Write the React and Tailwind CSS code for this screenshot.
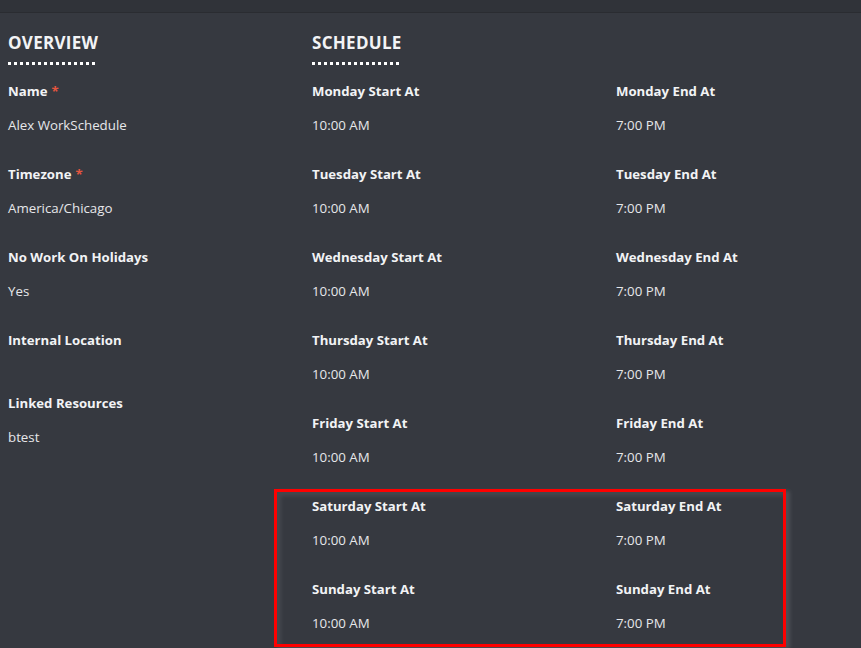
import React from "react";

const overview = [
  { label: "Name", value: "Alex WorkSchedule", req: true },
  { label: "Timezone", value: "America/Chicago", req: true },
  { label: "No Work On Holidays", value: "Yes" },
  { label: "Internal Location", value: "" },
  { label: "Linked Resources", value: "btest" },
];

const days = ["Monday", "Tuesday", "Wednesday", "Thursday", "Friday", "Saturday", "Sunday"];

function Field({ label, value, req }) {
  return (
    <div className="flex flex-col pb-[30px]">
      <div className="h-[18px] leading-[18px] text-[13.2px] font-bold text-[#f2f3f5]">
        {label}
        {req && <span className="ml-[4px] text-[#e4553f]">*</span>}
      </div>
      <div className="mt-[15px] leading-[20px] text-[13.3px] text-[#e6e7ea]">{value}</div>
    </div>
  );
}

function Heading({ children }) {
  return (
    <div className="h-[82px] pt-[31px]">
      <div className="inline-flex flex-col">
        <div className="text-[17px] leading-[24px] font-bold text-[#f2f3f5] tracking-[0.3px]">{children}</div>
        <div className="mt-[7px] h-[3px] w-full bg-[repeating-linear-gradient(to_right,#ffffff_0px,#ffffff_3px,transparent_3px,transparent_6px)]" />
      </div>
    </div>
  );
}

export default function App() {
  return (
    <div
      className="relative w-[861px] h-[648px] overflow-hidden bg-[#363940]"
      style={{ fontFamily: "'Open Sans', 'Noto Sans', sans-serif" }}
    >
      <div className="h-[13px] bg-[#303339] border-b border-[#2a2c31]" />
      <div className="grid grid-cols-[304px_304px_1fr] pl-[8px] mt-[-13px]">
        <div>
          <Heading>OVERVIEW</Heading>
          {overview.map((f) => (
            <Field key={f.label} {...f} />
          ))}
        </div>
        <div>
          <Heading>SCHEDULE</Heading>
          {days.map((d) => (
            <Field key={d} label={`${d} Start At`} value="10:00 AM" />
          ))}
        </div>
        <div>
          <div className="h-[82px]" />
          {days.map((d) => (
            <Field key={d} label={`${d} End At`} value="7:00 PM" />
          ))}
        </div>
      </div>
      <div className="absolute left-[274px] top-[489px] w-[512px] h-[158px] border-[3px] border-[#ff0000] shadow-[4px_2px_4px_rgba(255,255,255,0.12),inset_4px_4px_4px_rgba(255,255,255,0.08)]" />
    </div>
  );
}
